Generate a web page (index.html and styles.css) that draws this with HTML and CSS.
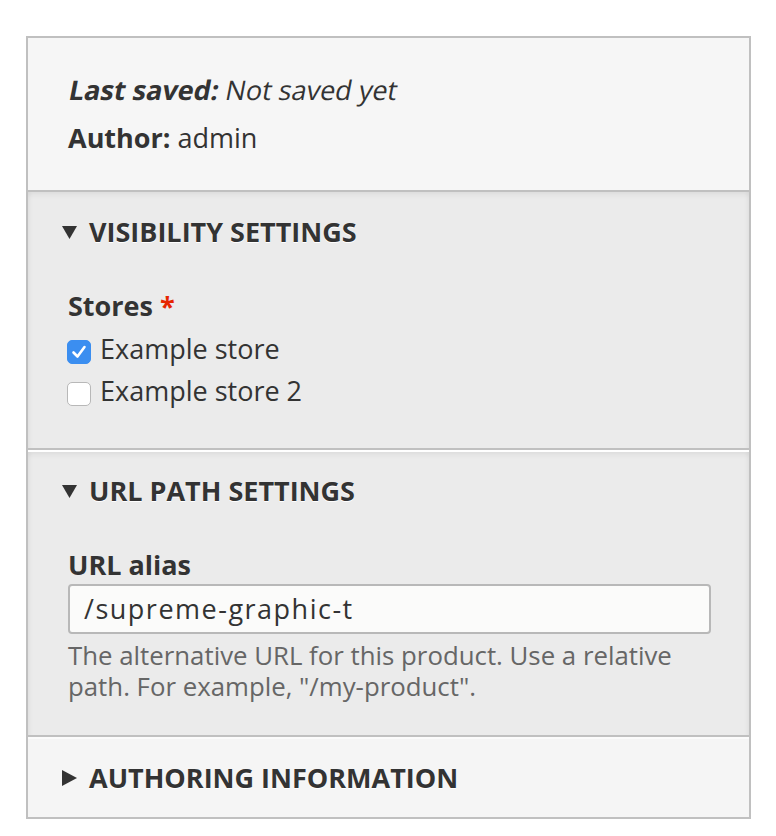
FILE: index.html
```html
<!DOCTYPE html>
<html lang="en">
<head>
<meta charset="utf-8">
<title>Entity meta</title>
<link rel="stylesheet" href="styles.css">
</head>
<body>
<div class="meta">
  <div class="meta-header">
    <p class="meta-line"><span class="oblique"><strong>Last saved:</strong> Not saved yet</span></p>
    <p class="meta-line meta-line-second"><strong>Author:</strong> admin</p>
  </div>

  <section class="sec sec-open sec-first">
    <div class="sec-title">
      <svg class="tri" width="15" height="13" viewBox="0 0 15 13"><polygon points="0,0 15,0 7.5,13" fill="#333"/></svg>
      <span>VISIBILITY SETTINGS</span>
    </div>
    <div class="sec-body">
      <div class="label label-stores">Stores <span class="req">*</span></div>
      <div class="check-row">
        <span class="cb cb-checked">
          <svg width="24" height="24" viewBox="0 0 24 24"><path d="M6.5 12.5 L10.5 16.5 L17.5 7" fill="none" stroke="#fff" stroke-width="2.6" stroke-linecap="round" stroke-linejoin="round"/></svg>
        </span>
        <span class="cb-text">Example store</span>
      </div>
      <div class="check-row">
        <span class="cb"></span>
        <span class="cb-text">Example store 2</span>
      </div>
    </div>
  </section>

  <section class="sec sec-open sec-url">
    <div class="sec-title">
      <svg class="tri" width="15" height="13" viewBox="0 0 15 13"><polygon points="0,0 15,0 7.5,13" fill="#333"/></svg>
      <span>URL PATH SETTINGS</span>
    </div>
    <div class="sec-body sec-body-url">
      <div class="label">URL alias</div>
      <div class="input">/supreme-graphic-t</div>
      <div class="desc">The alternative URL for this product. Use a relative path. For example, "/my-product".</div>
    </div>
  </section>

  <section class="sec sec-closed">
    <div class="sec-title">
      <svg class="tri tri-right" width="15" height="16" viewBox="0 0 15 16"><polygon points="0,0 15,8 0,16" fill="#333"/></svg>
      <span>AUTHORING INFORMATION</span>
    </div>
  </section>
</div>
</body>
</html>
```

FILE: styles.css
```css
html, body {
  margin: 0;
  padding: 0;
  background: #ffffff;
}

body {
  font-family: "Open Sans", "DejaVu Sans", sans-serif;
  font-size: 27px;
  color: #333333;
  padding: 36px 25px 18px 26px;
}

.meta {
  width: 721px;
  border: 2px solid #c0c0c0;
  background: #f5f5f5;
}

.meta-header {
  padding: 34px 40px 34px 40px;
  border-bottom: 2px solid #c0c0c0;
  background: #f6f6f6;
}

.meta-line {
  margin: 0;
  line-height: 36px;
}

.oblique {
  display: inline-block;
  transform: skewX(-11deg);
  transform-origin: 0 100%;
  margin-left: -2px;
}

.meta-line-second {
  margin-top: 12px;
}

.sec {
  background: #ebebeb;
}

.sec-open {
  box-shadow: inset 0 6px 6px -4px rgba(0, 0, 0, 0.07), inset 5px 0 5px -4px rgba(0, 0, 0, 0.06), inset -5px 0 5px -4px rgba(0, 0, 0, 0.06);
  border-bottom: 2px solid #c0c0c0;
}

.sec-first {
  padding: 22px 40px 36px 40px;
}

.sec-url {
  border-top: 2px solid #ffffff;
  padding: 21px 38px 33px 40px;
}

.sec-closed {
  background: #f5f5f5;
  border-top: 2px solid #fbfbfb;
  padding: 21px 40px 21px 40px;
}

.sec-title {
  display: flex;
  align-items: center;
  line-height: 36px;
  font-weight: 700;
  text-shadow: 0 1px 0 #ffffff;
  margin-left: -6px;
}

.tri {
  display: block;
  margin-right: 12px;
  flex: none;
}

.sec-body {
  padding-top: 38px;
}

.sec-body-url {
  padding-top: 38px;
}

.label {
  font-weight: 700;
  line-height: 36px;
}

.label-stores {
  margin-bottom: 4px;
}

.req {
  color: #e62600;
  font-weight: 700;
}

.check-row {
  display: flex;
  align-items: flex-start;
  line-height: 42px;
}

.cb {
  flex: none;
  box-sizing: border-box;
  width: 24px;
  height: 24px;
  margin-top: 12px;
  margin-left: -1px;
  margin-right: 9px;
  border-radius: 5px;
  background: #ffffff;
  border: 1px solid #b8b8b8;
  display: flex;
}

.cb-checked {
  background: #3b8ef0;
  border-color: #3b8ef0;
}

.cb-checked svg {
  display: block;
  margin: -1px;
}

.input {
  margin-top: 1px;
  height: 50px;
  box-sizing: border-box;
  border: 2px solid #b8b8b8;
  border-radius: 4px;
  background: #fbfbfa;
  padding: 0 14px;
  line-height: 46px;
  color: #333333;
  letter-spacing: 1.5px;
}

.desc {
  margin-top: 6px;
  font-size: 25.8px;
  line-height: 31px;
  color: #666666;
}
```
